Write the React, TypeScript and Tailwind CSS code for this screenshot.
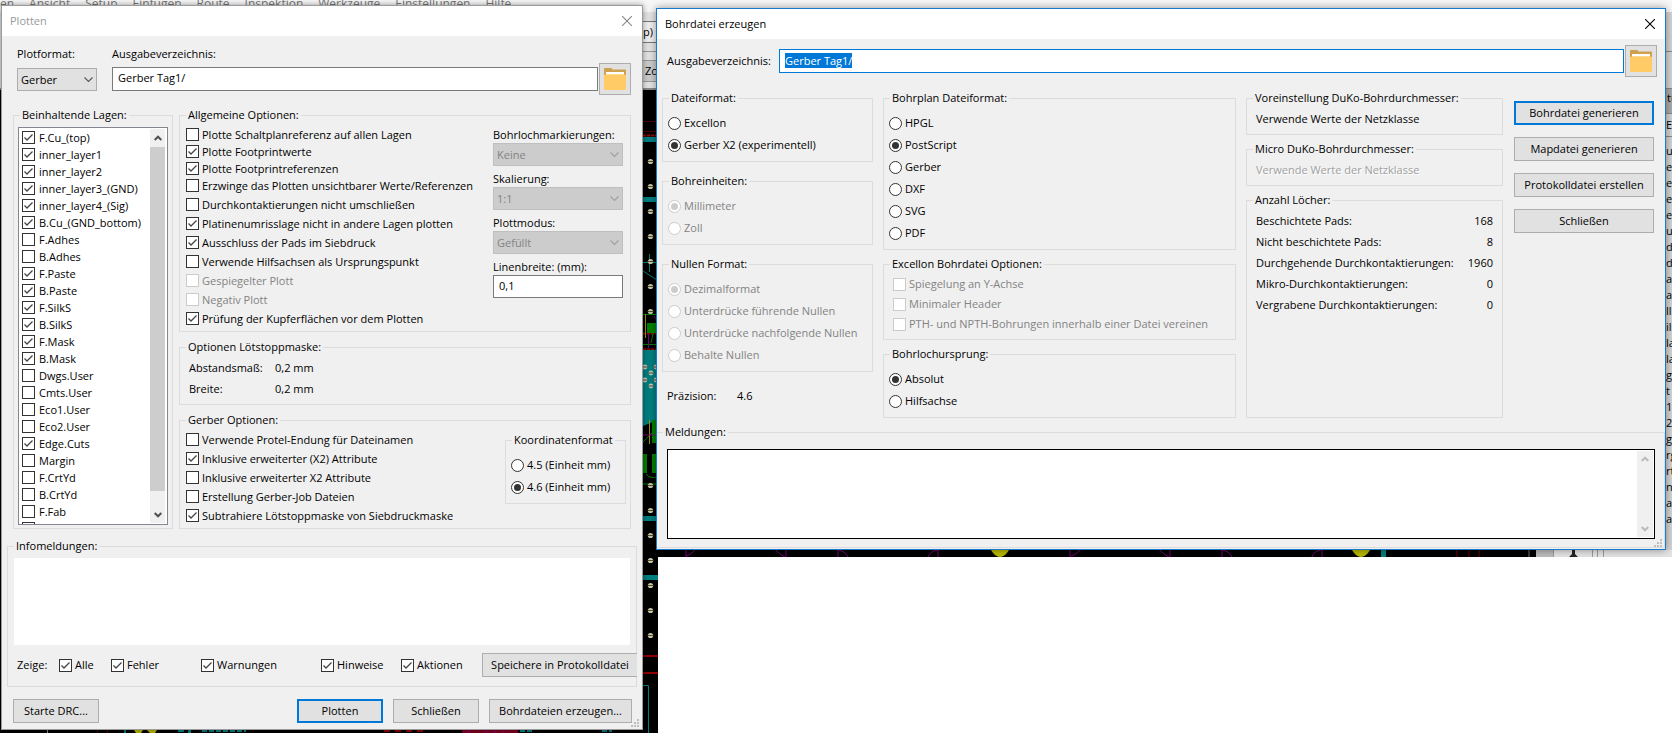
import { useEffect, useRef } from "react";
import type { ReactNode } from "react";

type Option = { label: string; checked?: boolean; disabled?: boolean };

function CheckBox({ label, checked, disabled, className = "h-[19px] gap-[3px]" }: Option & { className?: string }) {
  return (
    <label className={`flex items-center whitespace-nowrap ${disabled ? "text-[#838383]" : ""} ${className}`}>
      <span className="relative block size-[13px] shrink-0">
        <input
          type="checkbox"
          defaultChecked={checked}
          disabled={disabled}
          className="peer block size-[13px] appearance-none border border-[#333] bg-white disabled:border-[#ccc]"
        />
        <svg viewBox="0 0 13 13" className="pointer-events-none absolute inset-0 hidden size-[13px] peer-checked:block">
          <path d="M2.5 6.5 5 9l5.5-5.5" fill="none" stroke="#444" strokeWidth="1.3" />
        </svg>
      </span>
      {label}
    </label>
  );
}

function Radio({ name, label, checked, disabled }: Option & { name: string }) {
  return (
    <label className={`flex h-[22px] items-center gap-[3px] whitespace-nowrap ${disabled ? "text-[#838383]" : ""}`}>
      <span className="relative block size-[13px] shrink-0">
        <input
          type="radio"
          name={name}
          defaultChecked={checked}
          disabled={disabled}
          className="peer block size-[13px] appearance-none rounded-full border border-[#333] bg-white disabled:border-[#ccc]"
        />
        <span className="pointer-events-none absolute inset-[3px] hidden rounded-full bg-[#333] peer-checked:block peer-disabled:bg-[#ccc]" />
      </span>
      {label}
    </label>
  );
}

function Group({ title, className = "", children }: { title: string; className?: string; children: ReactNode }) {
  return (
    <fieldset className={`min-w-0 border border-[#dcdcdc] ${className}`}>
      <legend className="ml-[6px] h-[18px] px-[2px] leading-[18px] whitespace-nowrap">{title}</legend>
      {children}
    </fieldset>
  );
}

function RadioGroup({ title, name, options, className = "" }: { title: string; name: string; options: Option[]; className?: string }) {
  return (
    <Group title={title} className={className}>
      <div className="px-[5px] py-[5px]">
        {options.map((o) => (
          <Radio key={o.label} name={name} {...o} />
        ))}
      </div>
    </Group>
  );
}

function Button({ children, primary, className = "" }: { children: ReactNode; primary?: boolean; className?: string }) {
  return (
    <button
      type="button"
      className={`h-[24px] bg-[#e1e1e1] whitespace-nowrap ${primary ? "border-2 border-[#0078d7]" : "border border-[#adadad]"} ${className}`}
    >
      {children}
    </button>
  );
}

function FolderButton() {
  return (
    <button type="button" aria-label="Verzeichnis wählen" className="grid size-[32px] shrink-0 place-items-center border border-[#adadad] bg-[#e1e1e1]">
      <svg viewBox="0 0 22 22" className="size-[22px]">
        <path d="M0 1Q0 0 1 0h6q1 0 1.500 1.500H21q1 0 1 1V10H0z" fill="#cda14f" />
        <path d="M2 4h18v4H2z" fill="#fff" />
        <path d="M0 7q1 0 2-.8h18Q21 7 22 7v14q0 1-1 1H1q-1 0-1-1z" fill="#ffcb67" />
      </svg>
    </button>
  );
}

function CloseButton({ className }: { className: string }) {
  return (
    <button type="button" aria-label="Fenster schließen" className={className}>
      <svg viewBox="0 0 10 10" className="size-[10px]">
        <path d="M0 0 10 10M10 0 0 10" stroke="currentColor" strokeWidth="1.1" />
      </svg>
    </button>
  );
}

function Dropdown({ id, value, disabled }: { id: string; value: string; disabled?: boolean }) {
  return (
    <div className={`relative ${disabled ? "text-[#838383]" : ""}`}>
      <select
        id={id}
        disabled={disabled}
        className="block h-[23px] w-full appearance-none border border-[#adadad] bg-[#e1e1e1] pl-[3px] leading-[19px] disabled:border-[#bfbfbf] disabled:bg-[#ccc] disabled:opacity-100"
      >
        <option>{value}</option>
      </select>
      <svg viewBox="0 0 9 6" className="pointer-events-none absolute top-[9px] right-[4px] h-[6px] w-[9px]">
        <path d="M.5.5l4 4 4-4" fill="none" stroke={disabled ? "#a0a0a0" : "#555"} strokeWidth="1.1" />
      </svg>
    </div>
  );
}

function ScrollArrow({ up, className }: { up?: boolean; className: string }) {
  return (
    <svg viewBox="0 0 8 6" className={`h-[6px] w-[8px] ${className}`}>
      <path d={up ? "M.7 5 4 1.700 7.300 5" : "M.7 1 4 4.300 7.300 1"} fill="none" stroke="currentColor" strokeWidth="2" />
    </svg>
  );
}

function Grip() {
  return (
    <svg viewBox="0 0 8 8" className="absolute right-[3px] bottom-[2px] size-[8px]" fill="#bfbfbf">
      <path d="M6 0h2v2H6zM3 3h2v2H3zM6 3h2v2H6zM0 6h2v2H0zM3 6h2v2H3zM6 6h2v2H6z" />
    </svg>
  );
}

const menus = ["en", "Ansicht", "Setup", "Einfügen", "Route", "Inspektion", "Werkzeuge", "Einstellungen", "Hilfe"];

const layers: Option[] = [
  { label: "F.Cu_(top)", checked: true },
  { label: "inner_layer1", checked: true },
  { label: "inner_layer2", checked: true },
  { label: "inner_layer3_(GND)", checked: true },
  { label: "inner_layer4_(Sig)", checked: true },
  { label: "B.Cu_(GND_bottom)", checked: true },
  { label: "F.Adhes" },
  { label: "B.Adhes" },
  { label: "F.Paste", checked: true },
  { label: "B.Paste", checked: true },
  { label: "F.SilkS", checked: true },
  { label: "B.SilkS", checked: true },
  { label: "F.Mask", checked: true },
  { label: "B.Mask", checked: true },
  { label: "Dwgs.User" },
  { label: "Cmts.User" },
  { label: "Eco1.User" },
  { label: "Eco2.User" },
  { label: "Edge.Cuts", checked: true },
  { label: "Margin" },
  { label: "F.CrtYd" },
  { label: "B.CrtYd" },
  { label: "F.Fab" },
  { label: "" },
];

const footprintOptions: Option[] = [
  { label: "Plotte Schaltplanreferenz auf allen Lagen" },
  { label: "Plotte Footprintwerte", checked: true },
  { label: "Plotte Footprintreferenzen", checked: true },
  { label: "Erzwinge das Plotten unsichtbarer Werte/Referenzen" },
];

const boardOptions: Option[] = [
  { label: "Durchkontaktierungen nicht umschließen" },
  { label: "Platinenumrisslage nicht in andere Lagen plotten", checked: true },
  { label: "Ausschluss der Pads im Siebdruck", checked: true },
  { label: "Verwende Hilfsachsen als Ursprungspunkt" },
  { label: "Gespiegelter Plott", disabled: true },
  { label: "Negativ Plott", disabled: true },
  { label: "Prüfung der Kupferflächen vor dem Plotten", checked: true },
];

const gerberOptions: Option[] = [
  { label: "Verwende Protel-Endung für Dateinamen" },
  { label: "Inklusive erweiterter (X2) Attribute", checked: true },
  { label: "Inklusive erweiterter X2 Attribute" },
  { label: "Erstellung Gerber-Job Dateien" },
  { label: "Subtrahiere Lötstoppmaske von Siebdruckmaske", checked: true },
];

const dropdowns = [
  { id: "marks", label: "Bohrlochmarkierungen:", value: "Keine" },
  { id: "scale", label: "Skalierung:", value: "1:1" },
  { id: "mode", label: "Plottmodus:", value: "Gefüllt" },
];

const holes: [string, number][] = [
  ["Beschichtete Pads:", 168],
  ["Nicht beschichtete Pads:", 8],
  ["Durchgehende Durchkontaktierungen:", 1960],
  ["Mikro-Durchkontaktierungen:", 0],
  ["Vergrabene Durchkontaktierungen:", 0],
];

const padRows = [71, 96, 121, 146, 171, 196, 221, 395, 420, 445, 470, 495, 520, 545];

const sideList = ["u", "e", "e", "e", "e", "u", "d", "d", "a", "a", "ll", "ill", "la", "la", "g", "t", "1", "2", "ge", "rg", "rt", "n", "al", "a"];

function Backdrop() {
  return (
    <div aria-hidden="true" className="absolute inset-0 overflow-hidden">
      <div className="absolute inset-y-0 left-0 w-[658px] bg-black" />
      <div className="absolute inset-x-0 top-[550px] h-[7px] bg-black" />
      <div className="absolute inset-x-0 top-0 h-[90px] border-b-2 border-[#888] bg-[#e4e4e4]">
        <div className="h-[12px] bg-[#f7f7f7]">
          <div className="flex h-[8px] gap-[15px] text-[12px] text-[#777]">
            {menus.map((m) => (
              <span key={m} className="-mt-[4px] leading-[16px]">
                {m}
              </span>
            ))}
          </div>
        </div>
      </div>
      <div className="absolute top-[21px] left-[643px] w-[14px] overflow-hidden">
        <div className="h-[22px] border-y border-[#777] bg-[#f0f0f0] leading-[20px]">p)</div>
        <div className="mt-[8px] border-t border-[#999] pt-[8px]">
          <div className="h-[22px] border-y border-[#999] bg-[#ccc] pl-[2px] leading-[20px]">Zoom</div>
        </div>
      </div>
      {/* board canvas between the two windows, origin at 643/90 */}
      <svg viewBox="0 0 15 643" className="absolute top-[90px] left-[643px] h-[643px] w-[15px]">
        <path d="M0 31.500h15M0 41.500h15" stroke="#500000" />
        <path d="M0 45.500h15M0 243.500h15M0 259.500h15" stroke="#a00000" strokeDasharray="3 1" strokeWidth="2" />
        <path d="M0 47h15v5H0zM0 107h15v5H0zM0 260h15v70L0 336zM0 426h15v5H0zM0 485h15v5H0z" fill="#007f80" />
        <path d="M0 172.500h15M6.500 164v18M0 181l14 9" stroke="#007f80" fill="none" />
        <path d="M4 233h9v10H4zM9 330h6v23H9zM0 364h4v19H0zM9 364h6v19H9z" fill="#008000" />
        <path d="M0 224.500h15M0 254.500h15M0 352l12-12M3 384q4 5 12 3M0 394h15M8 253l4-18" stroke="#008000" fill="none" />
        <path d="M2.500 224v24M6.500 330v24" stroke="#a09000" />
        <path d="M5.500 244v14M0 345h12M11 226l4 6" stroke="#7f007f" fill="none" />
        <path d="M0 566h15M0 583h15" stroke="#900000" strokeWidth="2" />
        <path d="M0 595.500h5.500V643" stroke="#007f80" fill="none" />
        {padRows.map((y) => (
          <g key={y}>
            <circle cx="7.500" cy={y + 0.5} r="2.600" fill="#c8c8b0" />
            <path d={`M4.500 ${y + 0.5}h6`} stroke="#5a4a20" />
          </g>
        ))}
        {[[2, 277], [8, 283], [2, 290], [8, 296], [13, 277], [13, 290]].map(([x, y]) => (
          <g key={`${x}-${y}`}>
            <circle cx={x} cy={y} r="2.400" fill="#c8c8b0" />
            <path d={`M${x - 2.5} ${y}h5`} stroke="#444" />
          </g>
        ))}
      </svg>
      <svg viewBox="0 0 643 4" className="absolute top-[729px] left-0 h-[4px] w-[643px]">
        <path d="M47.500 0v4" stroke="#888" />
        <path d="M97.500 0v4M107.500 0v4" stroke="#500000" />
        <path d="M134 1h9l-2 3h-5zM147 1h10l-2 3h-5z" fill="#b8b800" />
        <path d="M124 1h2v3h-2zM178 1h6v2h-6zM188 1h3v3h-3z" fill="#007f80" />
        <path d="M202 2h44M520 2h12M602 2h10" stroke="#007f80" strokeDasharray="5 2" strokeWidth="2" />
        <path d="M384 2h42" stroke="#900000" strokeDasharray="6 5" strokeWidth="2" />
        <path d="M462 1h56v3h-56z" fill="#800020" />
        <path d="M469 1v3M486 1v3M495 1v3M503 1v3" stroke="#7f007f" />
      </svg>
      <svg viewBox="0 0 1014 7" className="absolute top-[550px] left-[658px] h-[7px] w-[1014px]">
        <path d="M28 0v7M37 0q-4 5-9 6M118 0q4 5 9 7M128 0v7M180 0v7M180 0q7 1 10 7M270 7q2-6 10-7M280 0v7M412 0v7M422 0q-4 5-9 6M502 0q4 5 9 7M512 0v7M564 0v7M564 0q7 1 10 7M654 7q2-6 9-7M664 0v7" stroke="#7f007f" fill="none" />
        <path d="M333 0h18q-4 7-9 7t-9-7zM694 0h18q-4 7-9 7t-9-7z" fill="#b8b800" />
        <path d="M723 0h5v7h-5z" fill="#007f80" />
        <path d="M799 0v7M811 0v7M821 0v7" stroke="#800000" />
        <path d="M871 0v7" stroke="#777" />
        <path d="M878 0h136v7H878z" fill="#e4e4e4" />
        <path d="M878 0h17v7h-17z" fill="#bbb" />
        <path d="M895.500 0v7M934.500 0v7M939.500 0v7M945.500 0v7" stroke="#999" />
        <path d="M914 0h3v4l3 3h-9l3-3z" fill="#222" />
      </svg>
      <div className="absolute top-[12px] right-0 h-[538px] w-[8px] overflow-hidden bg-[#d4d4d4]">
        <div className="h-[77px] border-b border-[#888] pt-[39px]">
          <div className="border-t border-[#888]" />
        </div>
        <div className="h-[24px] bg-[#aaa] pl-[3px] leading-[18px]">tu</div>
        <div className="h-[24px] border-y border-[#888] pl-[2px] leading-[22px]">E</div>
        <ul className="mt-[6px] pl-[2px]">
          {sideList.map((t, i) => (
            <li key={i} className="h-[16px] leading-[16px]">
              {t}
            </li>
          ))}
        </ul>
      </div>
    </div>
  );
}

function PlotDialog() {
  return (
    <section
      aria-label="Plotten"
      className="absolute top-[5px] left-[1px] w-[38%] min-w-[642px] border border-[#9b9b9b] bg-[#f0f0f0] shadow-[0_0_6px_rgba(0,0,0,0.4)]"
    >
      <header className="flex h-[30px] items-center justify-between bg-white pr-[10px] pl-[8px] text-[#999]">
        <h2>Plotten</h2>
        <CloseButton className="text-[#888]" />
      </header>
      <div className="flex gap-[15px] pt-[9px] pr-[11px] pl-[15px]">
        <div className="w-[80px]">
          <label htmlFor="format" className="block h-[18px] leading-[18px]">
            Plotformat:
          </label>
          <div className="flex h-[32px] items-center *:w-full">
            <Dropdown id="format" value="Gerber" />
          </div>
        </div>
        <div className="flex-1">
          <label htmlFor="plotdir" className="block h-[18px] leading-[18px]">
            Ausgabeverzeichnis:
          </label>
          <div className="flex h-[32px] items-center gap-[1px]">
            <input id="plotdir" defaultValue="Gerber Tag1/" className="h-[24px] min-w-0 flex-1 border border-[#7a7a7a] bg-white px-[5px] pb-[3px]" />
            <FolderButton />
          </div>
        </div>
      </div>

      <div className="mt-[11px] flex gap-[6px] px-[11px]">
        <Group title="Beinhaltende Lagen:" className="w-[160px] shrink-0">
          <div className="px-[4px] py-[3px]">
            <div className="flex h-[398px] justify-between overflow-hidden border border-[#828790] bg-white pr-[2px]">
              <div className="pt-[1px] pl-[3px]">
                {layers.map((l) => (
                  <CheckBox key={l.label} {...l} className="h-[17px] gap-[4px]" />
                ))}
              </div>
              <div className="my-[1px] flex w-[15px] shrink-0 flex-col items-center bg-[#f0f0f0] text-[#505050]">
                <ScrollArrow up className="my-[6px] shrink-0" />
                <div className="w-full flex-1 bg-[#cdcdcd]" />
                <div className="flex h-[32px] items-end pb-[5px]">
                  <ScrollArrow className="" />
                </div>
              </div>
            </div>
          </div>
        </Group>

        <div className="flex min-w-0 flex-1 flex-col gap-[6px]">
          <Group title="Allgemeine Optionen:">
            <div className="flex justify-between pt-[2px] pr-[7px] pb-[3px] pl-[6px]">
              <div className="flex flex-col gap-[1px]">
                <div>
                  {footprintOptions.map((o) => (
                    <CheckBox key={o.label} {...o} className="h-[17px] gap-[3px]" />
                  ))}
                </div>
                <div>
                  {boardOptions.map((o) => (
                    <CheckBox key={o.label} {...o} />
                  ))}
                </div>
              </div>
              <div className="flex w-[130px] shrink-0 flex-col gap-[5px] pt-[1px]">
                {dropdowns.map((d) => (
                  <div key={d.id}>
                    <label htmlFor={d.id} className="block h-[16px] leading-[16px] whitespace-nowrap">
                      {d.label}
                    </label>
                    <Dropdown id={d.id} value={d.value} disabled />
                  </div>
                ))}
                <div>
                  <label htmlFor="linewidth" className="block h-[16px] leading-[16px]">
                    Linenbreite: (mm):
                  </label>
                  <input id="linewidth" defaultValue="0,1" className="block h-[23px] w-full border border-[#7a7a7a] bg-white px-[5px] pb-[2px]" />
                </div>
              </div>
            </div>
          </Group>

          <Group title="Optionen Lötstoppmaske:">
            <dl className="grid grid-cols-[86px_1fr] px-[9px] pt-[1px] pb-[5px] leading-[21px]">
              <dt>Abstandsmaß:</dt>
              <dd>0,2 mm</dd>
              <dt>Breite:</dt>
              <dd>0,2 mm</dd>
            </dl>
          </Group>

          <Group title="Gerber Optionen:">
            <div className="flex items-start justify-between pt-[1px] pr-[4px] pb-[3px] pl-[6px]">
              <div>
                {gerberOptions.map((o) => (
                  <CheckBox key={o.label} {...o} />
                ))}
              </div>
              <RadioGroup
                title="Koordinatenformat"
                name="coords"
                className="mt-[1px] w-[121px]"
                options={[{ label: "4.5 (Einheit mm)" }, { label: "4.6 (Einheit mm)", checked: true }]}
              />
            </div>
          </Group>
        </div>
      </div>

      <Group title="Infomeldungen:" className="mx-[5px] mt-[8px]">
        <div className="pt-[3px] pb-[9px]">
          <div className="mx-[6px] h-[87px] bg-white" />
          <div className="-mr-px mt-[8px] grid grid-cols-[42px_52px_90px_120px_80px_81px_minmax(0,1fr)] items-center pl-[9px]">
            <span>Zeige:</span>
            <CheckBox label="Alle" checked />
            <CheckBox label="Fehler" checked />
            <CheckBox label="Warnungen" checked />
            <CheckBox label="Hinweise" checked />
            <CheckBox label="Aktionen" checked />
            <Button className="border-r-0">Speichere in Protokolldatei</Button>
          </div>
        </div>
      </Group>

      <footer className="mt-[12px] flex gap-[10px] pr-[10px] pb-[6px] pl-[11px]">
        <Button className="mr-auto w-[86px]">Starte DRC...</Button>
        <Button primary className="w-[86px]">
          Plotten
        </Button>
        <Button className="w-[86px]">Schließen</Button>
        <Button className="w-[143px]">Bohrdateien erzeugen...</Button>
      </footer>
      <Grip />
    </section>
  );
}

function DrillDialog() {
  const dir = useRef<HTMLInputElement>(null);
  useEffect(() => {
    dir.current?.focus();
    dir.current?.select();
  }, []);

  return (
    <section
      aria-label="Bohrdatei erzeugen"
      className="absolute top-[8px] right-[6px] left-[656px] min-w-[1010px] border border-[#1979ca] bg-[#f0f0f0] pb-[1px] shadow-[0_0_8px_rgba(0,0,0,0.4)]"
    >
      <header className="flex h-[30px] items-center justify-between bg-white pr-[10px] pl-[8px]">
        <h2>Bohrdatei erzeugen</h2>
        <CloseButton className="text-black" />
      </header>
      <div className="flex items-center pt-[6px] pr-[8px] pl-[10px]">
        <label htmlFor="drilldir" className="w-[112px]">
          Ausgabeverzeichnis:
        </label>
        <input
          id="drilldir"
          ref={dir}
          defaultValue="Gerber Tag1/"
          className="mr-[1px] h-[24px] min-w-0 flex-1 border border-[#0078d7] bg-white px-[5px] pb-[2px] outline-none selection:bg-[#0078d7] selection:text-white"
        />
        <FolderButton />
      </div>

      <div className="mt-[12px] grid grid-cols-[minmax(0,211fr)_minmax(0,353fr)_minmax(0,257fr)_minmax(0,141fr)] gap-[10px] pr-[11px] pl-[5px]">
        <div className="flex flex-col gap-[10px]">
          <RadioGroup title="Dateiformat:" name="file" options={[{ label: "Excellon" }, { label: "Gerber X2 (experimentell)", checked: true }]} />
          <RadioGroup
            title="Bohreinheiten:"
            name="units"
            options={[
              { label: "Millimeter", checked: true, disabled: true },
              { label: "Zoll", disabled: true },
            ]}
          />
          <RadioGroup
            title="Nullen Format:"
            name="zeros"
            options={[
              { label: "Dezimalformat", checked: true, disabled: true },
              { label: "Unterdrücke führende Nullen", disabled: true },
              { label: "Unterdrücke nachfolgende Nullen", disabled: true },
              { label: "Behalte Nullen", disabled: true },
            ]}
          />
          <dl className="mt-[6px] grid grid-cols-[70px_1fr] pl-[5px]">
            <dt>Präzision:</dt>
            <dd>4.6</dd>
          </dl>
        </div>

        <div className="flex flex-col gap-[5px]">
          <RadioGroup
            title="Bohrplan Dateiformat:"
            name="map"
            options={[{ label: "HPGL" }, { label: "PostScript", checked: true }, { label: "Gerber" }, { label: "DXF" }, { label: "SVG" }, { label: "PDF" }]}
          />
          <Group title="Excellon Bohrdatei Optionen:">
            <div className="px-[9px] pt-[1px] pb-[5px]">
              <CheckBox label="Spiegelung an Y-Achse" disabled className="h-[20px] gap-[3px]" />
              <CheckBox label="Minimaler Header" disabled className="h-[20px] gap-[3px]" />
              <CheckBox label="PTH- und NPTH-Bohrungen innerhalb einer Datei vereinen" disabled className="h-[20px] gap-[3px]" />
            </div>
          </Group>
          <RadioGroup title="Bohrlochursprung:" name="origin" options={[{ label: "Absolut", checked: true }, { label: "Hilfsachse" }]} />
        </div>

        <div className="flex flex-col gap-[5px]">
          <Group title="Voreinstellung DuKo-Bohrdurchmesser:">
            <p className="px-[9px] pt-[1px] pb-[5px] leading-[21px]">Verwende Werte der Netzklasse</p>
          </Group>
          <Group title="Micro DuKo-Bohrdurchmesser:">
            <p className="px-[9px] pt-[1px] pb-[5px] leading-[21px] text-[#a0a0a0] [text-shadow:1px_1px_0_#fff]">Verwende Werte der Netzklasse</p>
          </Group>
          <Group title="Anzahl Löcher:" className="flex-1">
            <div className="px-[9px] pt-[1px]">
              <table className="w-full leading-[21px]">
                <tbody>
                  {holes.map(([label, count]) => (
                    <tr key={label}>
                      <th scope="row" className="text-left font-normal whitespace-nowrap">
                        {label}
                      </th>
                      <td className="text-right">{count}</td>
                    </tr>
                  ))}
                </tbody>
              </table>
            </div>
          </Group>
        </div>

        <div className="flex flex-col gap-[12px] pt-[12px] pl-[1px]">
          <Button primary>Bohrdatei generieren</Button>
          <Button>Mapdatei generieren</Button>
          <Button>Protokolldatei erstellen</Button>
          <Button>Schließen</Button>
        </div>
      </div>

      <Group title="Meldungen:" className="mt-[5px] border-l-0">
        <div className="pt-[8px] pr-[9px] pb-[8px] pl-[10px]">
          <div className="flex h-[90px] justify-end border border-black bg-white p-[1px]">
            <div className="flex w-[16px] flex-col items-center justify-between bg-[#f0f0f0] py-[5px] text-[#bbb]">
              <ScrollArrow up className="" />
              <ScrollArrow className="" />
            </div>
          </div>
        </div>
      </Group>
      <Grip />
    </section>
  );
}

export default function App() {
  return (
    <main className="relative min-h-screen overflow-hidden bg-white font-['Open_Sans','Noto_Sans',sans-serif] text-[11px] leading-[16px] text-black">
      <Backdrop />
      <PlotDialog />
      <DrillDialog />
    </main>
  );
}
